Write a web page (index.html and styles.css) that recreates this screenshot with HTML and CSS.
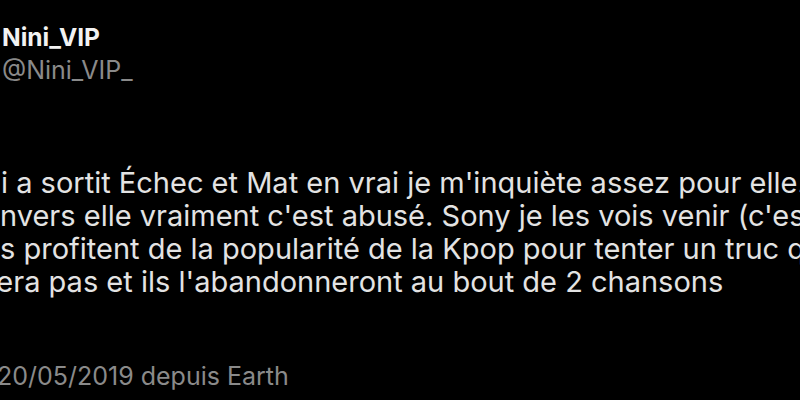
FILE: index.html
```html
<!DOCTYPE html>
<html lang="fr">
<head>
  <meta charset="UTF-8">
  <meta name="viewport" content="width=device-width, initial-scale=1.0">
  <title>Nini_VIP</title>
  <link rel="stylesheet" href="styles.css">
</head>
<body>
  <div class="tweet">
    <div class="author">
      <div class="name">Nini_VIP</div>
      <div class="handle">@Nini_VIP_</div>
    </div>
    <div class="text">
      <div class="line line-1">i a sortit Échec et Mat en vrai je m'inquiète assez pour elle. Dans</div>
      <div class="line line-2">nvers elle vraiment c'est abusé. Sony je les vois venir (c'est</div>
      <div class="line line-3">s profitent de la popularité de la Kpop pour tenter un truc qui</div>
      <div class="line line-4">sera pas et ils l'abandonneront au bout de 2 chansons</div>
    </div>
    <div class="meta">20/05/2019 depuis Earth</div>
  </div>
</body>
</html>
```

FILE: styles.css
```css
/* Reset */
* {
  margin: 0;
  padding: 0;
  box-sizing: border-box;
}
body {
  background: #000;
  color: #e7e7e7;
  font-family: Inter, "Noto Sans", sans-serif;
  width: 800px;
  height: 400px;
  overflow: hidden;
}
/* tweet container, cropped on both sides */
.tweet {
  width: 800px;
  height: 400px;
  overflow: hidden;
  padding-top: 22px;
}
.author {
  padding-left: 2px;
}
.name {
  font-size: 24.5px;
  font-weight: 700;
  line-height: 30px;
  color: #f2f2f2;
}
.handle {
  font-size: 25px;
  line-height: 36px;
  color: #8a8a8a;
}
/* tweet body */
.text {
  margin-top: 78px;
  font-size: 29px;
  line-height: 33px;
  color: #e3e3e3;
}
.line {
  white-space: nowrap;
}
.line-1 {
  margin-left: 1px;
}
.line-4 {
  margin-left: -19px;
}
/* date line */
.meta {
  margin-top: 63px;
  font-size: 25px;
  line-height: 30px;
  color: #8a8a8a;
  margin-left: -3px;
}
```
